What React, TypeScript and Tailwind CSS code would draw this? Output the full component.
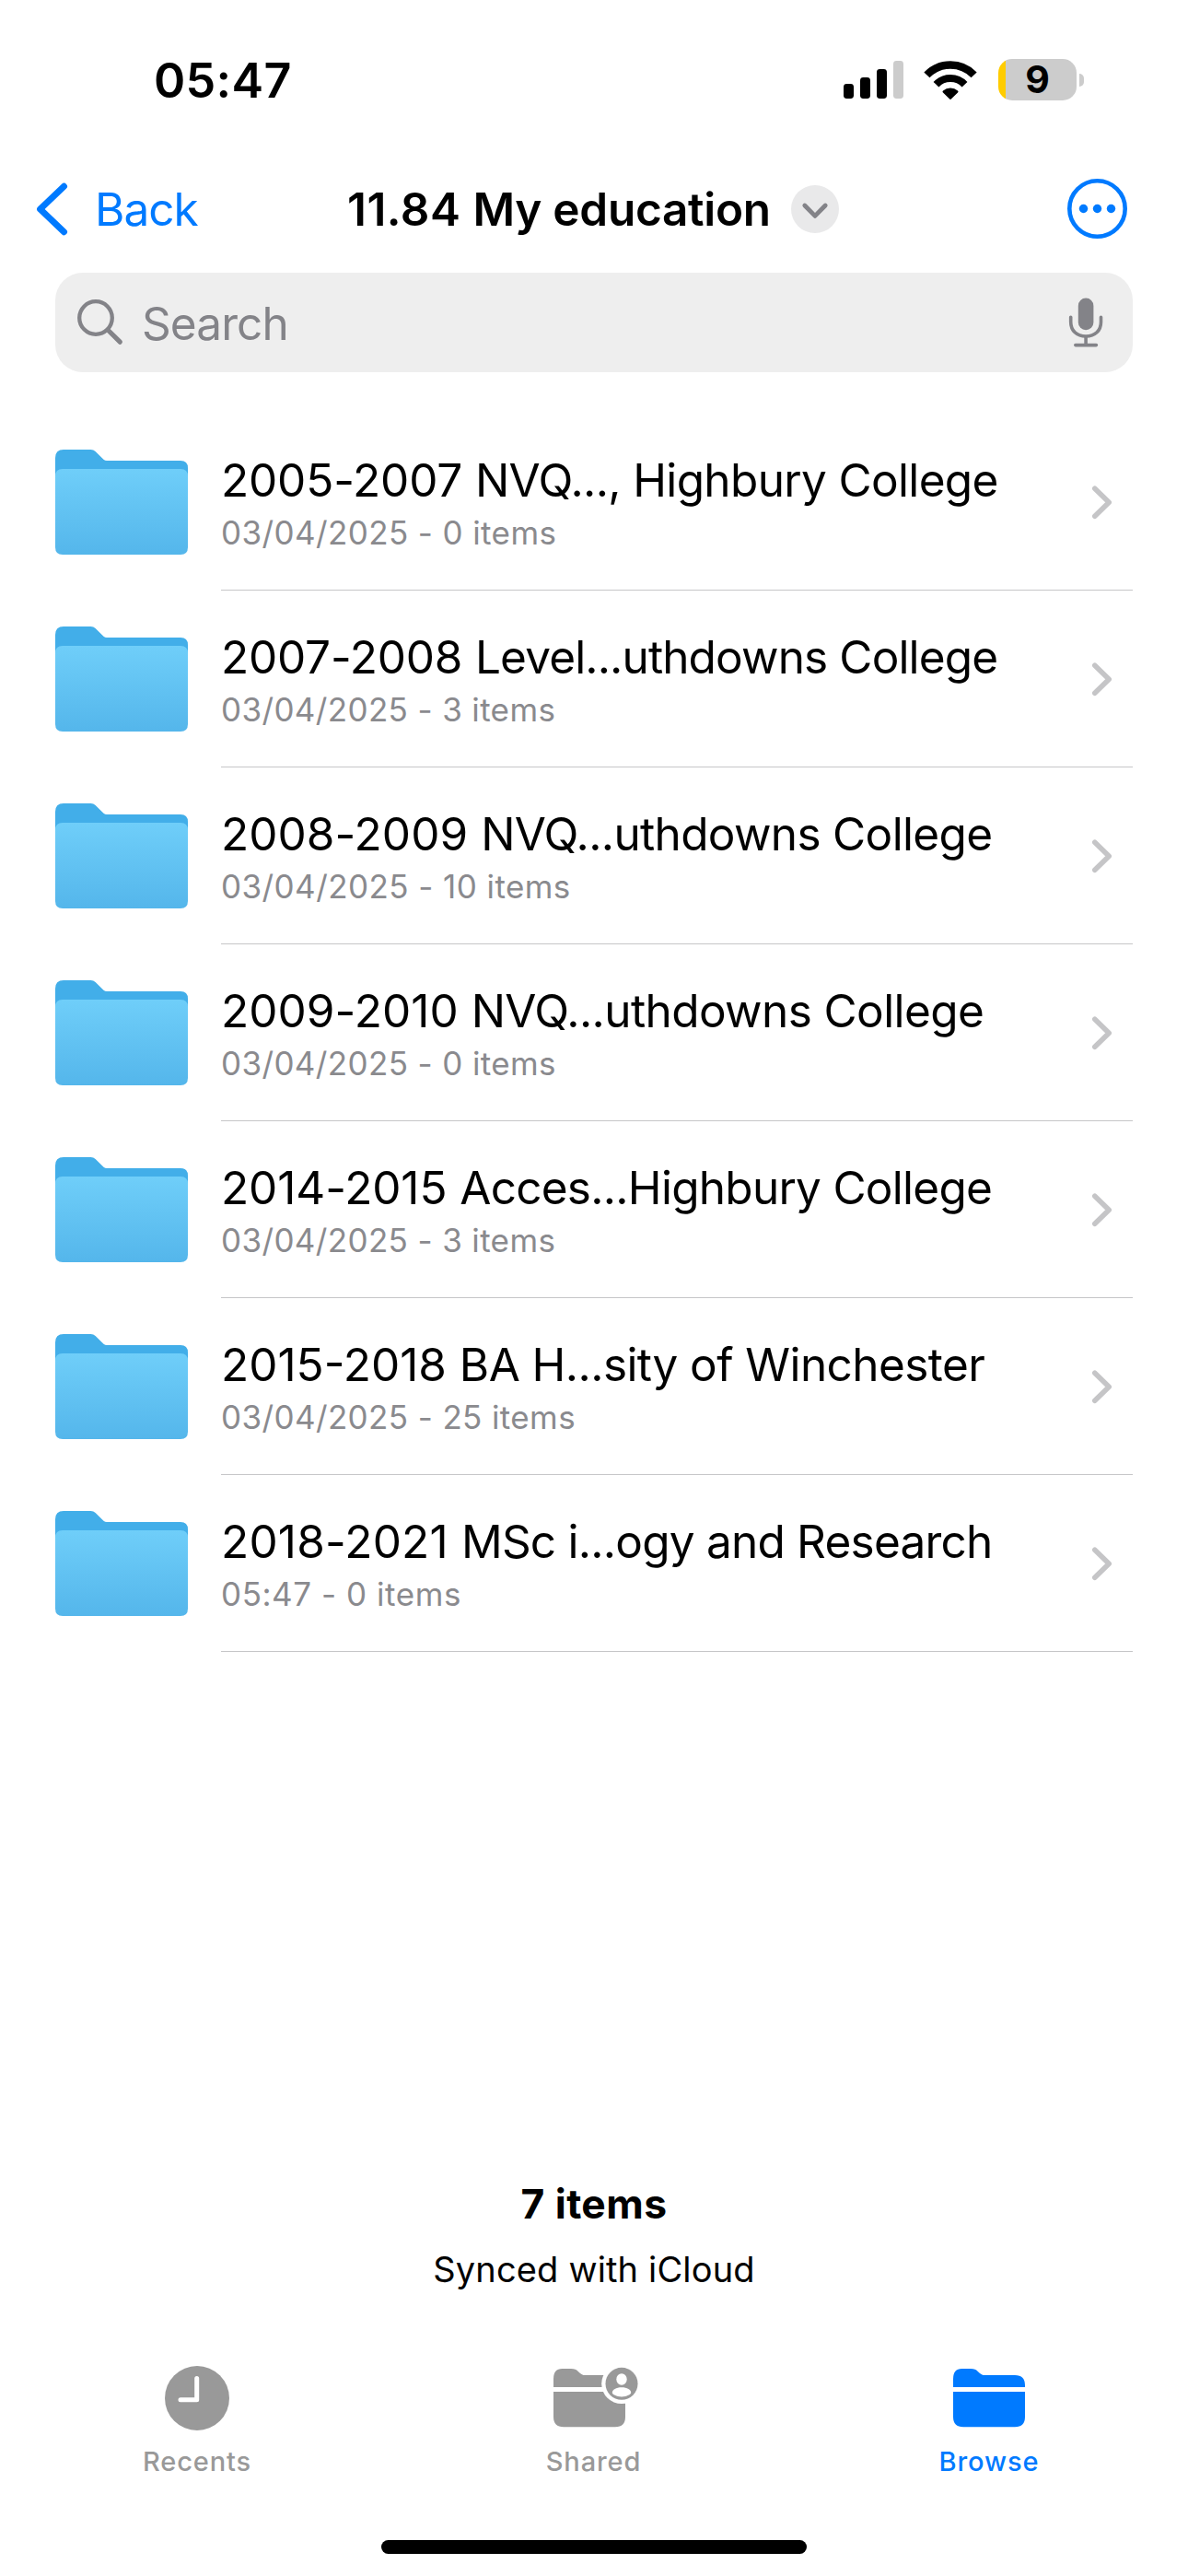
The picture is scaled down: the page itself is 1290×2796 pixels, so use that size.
type Folder = {
  years: string;
  name: string;
  detail: string;
  yearsTracking: string;
  nameTracking: string;
  detailTracking: string;
};

const folders: Folder[] = [
  { years: "2005-2007 ", name: "NVQ..., Highbury College", detail: "03/04/2025 - 0 items", yearsTracking: "tracking-[-0.15px]", nameTracking: "tracking-[-0.65px]", detailTracking: "tracking-[0.39px]" },
  { years: "2007-2008 ", name: "Level...uthdowns College", detail: "03/04/2025 - 3 items", yearsTracking: "tracking-[-0.2px]", nameTracking: "tracking-[-0.86px]", detailTracking: "tracking-[0.36px]" },
  { years: "2008-2009 ", name: "NVQ...uthdowns College", detail: "03/04/2025 - 10 items", yearsTracking: "tracking-[0.05px]", nameTracking: "tracking-[-0.66px]", detailTracking: "tracking-[0.43px]" },
  { years: "2009-2010 ", name: "NVQ...uthdowns College", detail: "03/04/2025 - 0 items", yearsTracking: "tracking-[0.05px]", nameTracking: "tracking-[-0.6px]", detailTracking: "tracking-[0.37px]" },
  { years: "2014-2015 ", name: "Acces...Highbury College", detail: "03/04/2025 - 3 items", yearsTracking: "tracking-[-0.1px]", nameTracking: "tracking-[-0.73px]", detailTracking: "tracking-[0.36px]" },
  { years: "2015-2018 ", name: "BA H...sity of Winchester", detail: "03/04/2025 - 25 items", yearsTracking: "tracking-[0px]", nameTracking: "tracking-[-0.57px]", detailTracking: "tracking-[0.38px]" },
  { years: "2018-2021 ", name: "MSc i...ogy and Research", detail: "05:47 - 0 items", yearsTracking: "tracking-[0.2px]", nameTracking: "tracking-[-0.77px]", detailTracking: "tracking-[0.55px]" },
];

function StatusBar() {
  return (
    <header className="flex h-[176px] shrink-0 items-center justify-between pr-[113px] pl-[167px]">
      <span className="text-[52px] leading-[64px] font-semibold tracking-[0.3px]">05:47</span>
      <div className="flex items-center pb-[3px]">
        <svg width="65" height="41" viewBox="0 0 65 41">
          <rect x="0" y="25" width="11" height="16" rx="3.4" />
          <rect x="18" y="18" width="11" height="23" rx="3.4" />
          <rect x="36" y="9" width="11" height="32" rx="3.4" />
          <rect x="54" y="0" width="11" height="41" rx="3.4" fill="#cccccc" />
        </svg>
        <svg className="ml-[22px]" width="58" height="42" viewBox="0 0 58 42" fill="none" stroke="#000">
          <path d="M3.4 15.4A35.65 35.65 0 0 1 54.6 15.4" strokeWidth="8.5" />
          <path d="M13.5 25.7A21.2 21.2 0 0 1 44.5 25.7" strokeWidth="8" />
          <path d="M21 34.4Q20 33.4 21 32.6A12 12 0 0 1 37 32.6Q38 33.4 37 34.4L29.8 41.6Q29 42.4 28.2 41.6Z" fill="#000" stroke="none" />
        </svg>
        <div className="ml-[23px] flex h-[45px] w-[85px] items-center justify-center rounded-[15px] bg-[linear-gradient(to_right,#ffcc00_8px,#cccccc_8px)]">
          <span className="text-[41px] leading-[45px] font-bold">9</span>
        </div>
        <div className="ml-[3px] h-[14px] w-[5px] rounded-r-full bg-[#cccccc]" />
      </div>
    </header>
  );
}

function NavBar() {
  return (
    <nav className="flex h-[102px] shrink-0 items-center pr-[65px]">
      <div className="flex w-[377px] items-center pl-[39px] text-[#007aff]">
        <svg width="35" height="58" viewBox="0 0 35 58" fill="none" stroke="currentColor" strokeWidth="7" strokeLinecap="round" strokeLinejoin="round">
          <path d="M30.5 4.3L4.6 29L30.5 53.7" />
        </svg>
        <span className="ml-[29px] text-[49.5px] leading-[60px] tracking-[-1px]">Back</span>
      </div>
      <h1 className="w-[460px] text-[49.5px] leading-[60px] font-semibold tracking-[0.5px] whitespace-pre">
        11.84 <span className="tracking-[-0.28px]">My education</span>
      </h1>
      <svg className="ml-[22px]" width="52" height="52" viewBox="0 0 52 52" fill="none">
        <circle cx="26" cy="26" r="26" fill="#e9e9ea" />
        <path d="M14.8 22L26 33.4L37.2 22" stroke="#838388" strokeWidth="4.8" strokeLinecap="round" strokeLinejoin="round" />
      </svg>
      <svg className="ml-auto" width="66" height="66" viewBox="0 0 66 66" fill="#007aff">
        <circle cx="32.5" cy="32.5" r="30.2" fill="none" stroke="#007aff" strokeWidth="4.6" />
        <circle cx="17.5" cy="32.5" r="4.7" />
        <circle cx="32.5" cy="32.5" r="4.7" />
        <circle cx="47.5" cy="32.5" r="4.7" />
      </svg>
    </nav>
  );
}

function SearchField() {
  return (
    <div className="mx-[60px] mt-[18px] flex h-[108px] shrink-0 items-center rounded-[30px] bg-[#eeeeee] pr-[31px] pl-[23px] text-[#838388]">
      <svg width="52" height="52" viewBox="0 0 52 52" fill="none" stroke="currentColor" strokeLinecap="round">
        <circle cx="21" cy="21" r="17.8" strokeWidth="4.3" />
        <path d="M34 34L47.3 47.2" strokeWidth="5.2" />
      </svg>
      <span className="ml-[19px] pt-[2px] text-[49.5px] leading-[60px] tracking-[-0.9px]">Search</span>
      <svg className="ml-auto" width="40" height="54" viewBox="0 0 40 54" fill="none" stroke="currentColor" strokeLinecap="round">
        <rect x="11.8" y="0.6" width="16.6" height="34.6" rx="8.3" fill="currentColor" stroke="none" />
        <path d="M3.7 21.3V26.5C3.7 36 10.2 42 20.1 42S36.5 36 36.5 26.5V21.3" strokeWidth="3.6" />
        <path d="M20.1 43V51M8.8 51.6H31.4" strokeWidth="3.6" />
      </svg>
    </div>
  );
}

function FolderIcon() {
  return (
    <svg className="mt-[39px] shrink-0" width="144" height="114" viewBox="0 0 144 114">
      <defs>
        <linearGradient id="folder-front" x1="0" y1="0" x2="0" y2="1">
          <stop offset="0" stopColor="#6fcef9" />
          <stop offset="1" stopColor="#54b6eb" />
        </linearGradient>
      </defs>
      <path d="M0 40V9Q0 0 9 0H38.5Q41.5 0 43.6 2L52.5 10.7Q54 12 56 12H136Q144 12 144 20V40Z" fill="#42aee9" />
      <path d="M0 29Q0 21 8 21H136Q144 21 144 29V106Q144 114 136 114H8Q0 114 0 106Z" fill="url(#folder-front)" />
    </svg>
  );
}

function FolderRow({ years, name, detail, yearsTracking, nameTracking, detailTracking }: Folder) {
  return (
    <li className="flex h-[192px] px-[60px]">
      <FolderIcon />
      <div className="ml-9 flex flex-1 items-center border-b border-[#c6c6c8] pr-[22px]">
        <div className="flex-1 self-start pt-[42px]">
          <div className="text-[49.5px] leading-[60px] whitespace-pre">
            <span className={yearsTracking}>{years}</span>
            <span className={nameTracking}>{name}</span>
          </div>
          <div className={`mt-[6px] text-[35px] leading-[42px] whitespace-pre text-[#8a8a8e] ${detailTracking}`}>{detail}</div>
        </div>
        <svg width="23" height="38" viewBox="0 0 23 38" fill="none" stroke="#c5c5c7" strokeWidth="5.6" strokeLinecap="round" strokeLinejoin="round">
          <path d="M3.8 4.3L19.2 19.3L3.8 34.3" />
        </svg>
      </div>
    </li>
  );
}

function FolderGlyph() {
  return (
    <>
      <path d="M0 20V11Q0 0 9.5 0H19C23 0 24.6 0.9 26.8 2.9L28.7 4.7C30.7 6.5 32 7 34.5 7H67Q78 7 78 18V20Z" />
      <path d="M0 25H78V52.3Q78 63.3 67 63.3H11Q0 63.3 0 52.3Z" />
    </>
  );
}

function TabBar() {
  return (
    <nav className="mt-[67px] grid shrink-0 grid-cols-3 text-[29px] leading-[40px] font-medium tracking-[0.9px] text-[#999999]">
      <div className="flex flex-col items-center pr-[2px]">
        <svg width="70" height="86" viewBox="0 0 70 86">
          <circle cx="35" cy="43" r="35" fill="currentColor" />
          <path d="M34.7 21.5V44.7H17" fill="none" stroke="#fff" strokeWidth="5" strokeLinecap="round" strokeLinejoin="round" />
        </svg>
        <span className="mt-[6px]">Recents</span>
      </div>
      <div className="flex flex-col items-center pr-px">
        <svg width="97" height="86" viewBox="0 0 97 86" fill="currentColor">
          <g transform="translate(5 11)">
            <FolderGlyph />
          </g>
          <circle cx="79" cy="27.3" r="21.8" fill="#fff" />
          <circle cx="79" cy="27.3" r="17.5" />
          <ellipse cx="79" cy="22.5" rx="5.7" ry="6.2" fill="#fff" />
          <path d="M68.8 37C68.8 34 73 31.3 79 31.3S89.2 34 89.2 37C89.2 38.8 84.5 41.4 79 41.4S68.8 38.8 68.8 37Z" fill="#fff" />
        </svg>
        <span className="mt-[6px]">Shared</span>
      </div>
      <div className="flex flex-col items-center pr-[2px] text-[#007aff]">
        <svg width="78" height="86" viewBox="0 0 78 86" fill="currentColor">
          <g transform="translate(0 11)">
            <FolderGlyph />
          </g>
        </svg>
        <span className="mt-[6px]">Browse</span>
      </div>
    </nav>
  );
}

export default function App() {
  return (
    <div className="flex h-[2796px] w-[1290px] flex-col overflow-hidden bg-white font-['Inter',sans-serif] text-black">
      <StatusBar />
      <NavBar />
      <SearchField />
      <ul className="mt-[45px]">
        {folders.map((folder) => (
          <FolderRow key={folder.years} {...folder} />
        ))}
      </ul>
      <div className="mt-auto text-center">
        <div className="text-[44.4px] leading-[60px] font-bold tracking-[0.4px]">7 items</div>
        <div className="mt-[11px] text-[38px] leading-[60px] tracking-[0.16px]">Synced with iCloud</div>
      </div>
      <TabBar />
      <div className="mx-auto mt-[65px] mb-6 h-[15px] w-[462px] shrink-0 rounded-full bg-black" />
    </div>
  );
}
